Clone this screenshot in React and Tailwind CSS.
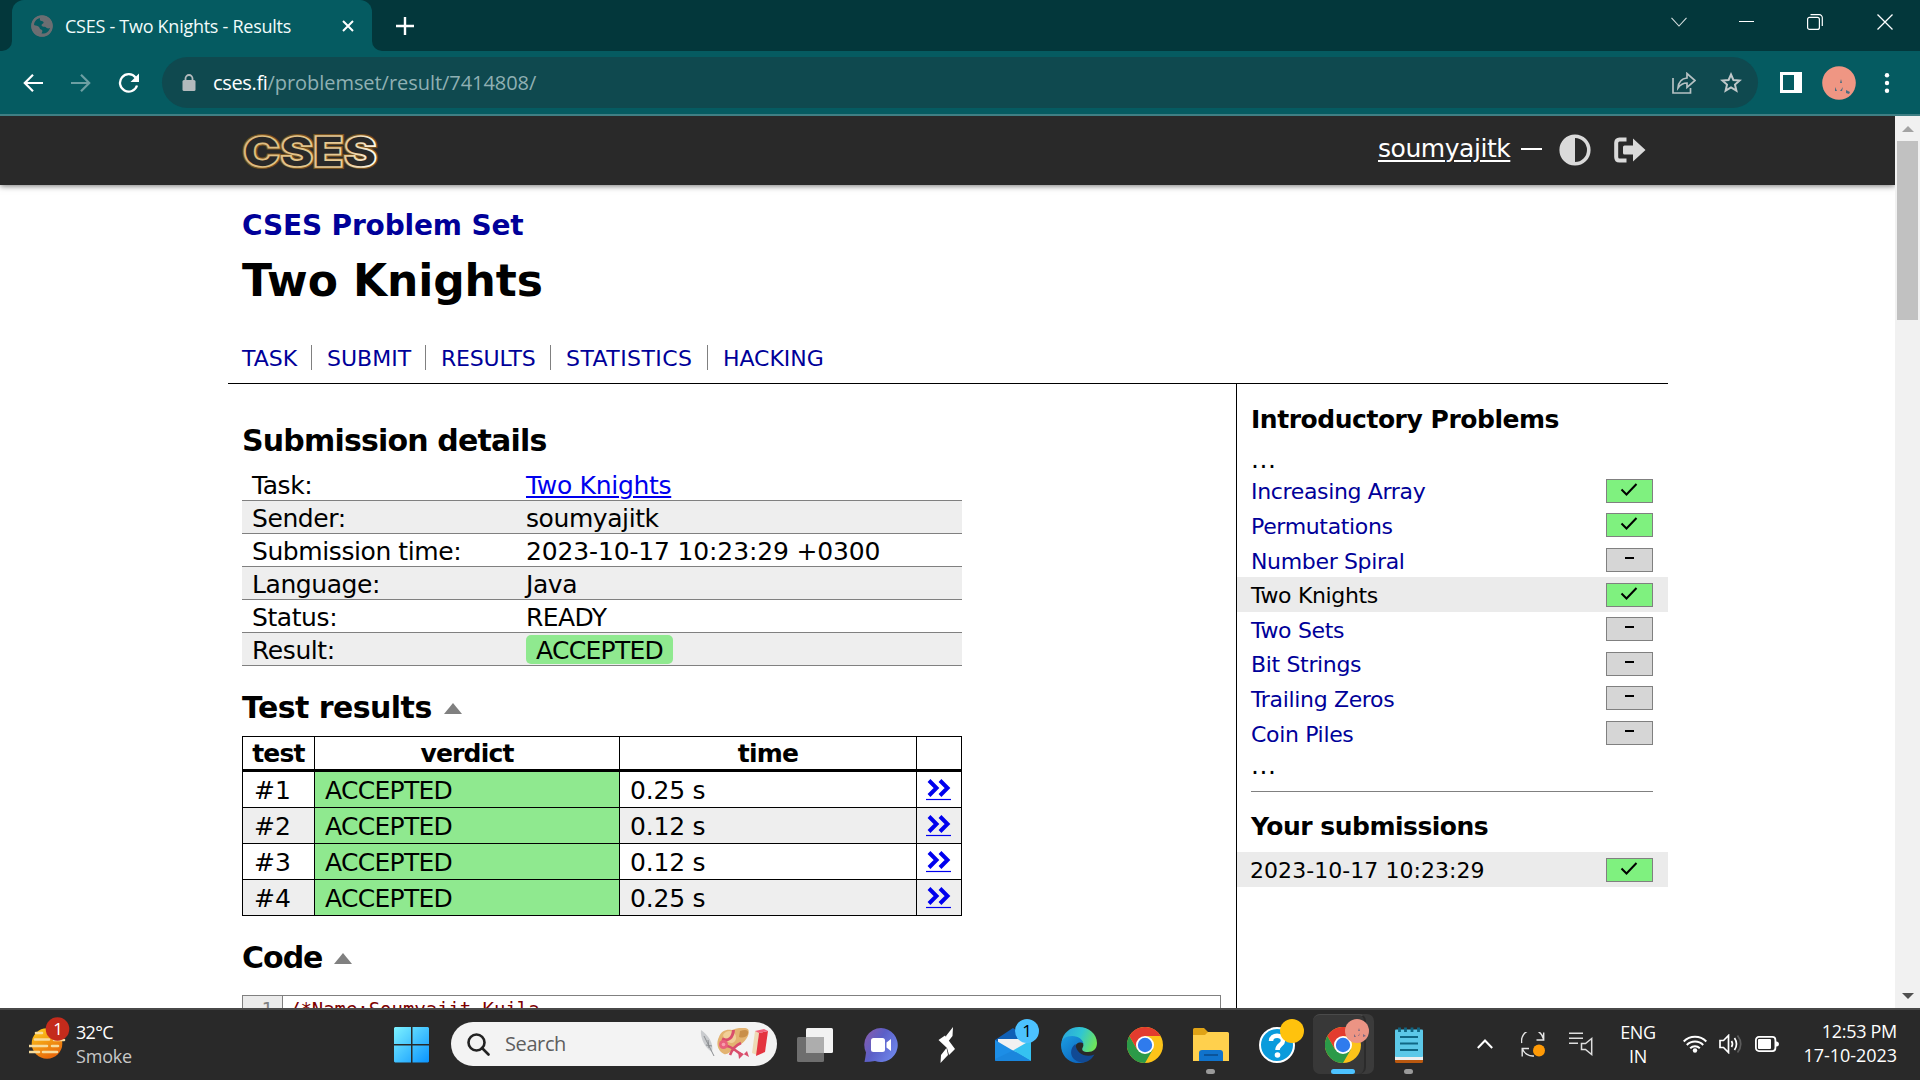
import React from "react";

function Chrome() {
  return (
    <svg viewBox="0 0 48 48" className="h-9 w-9">
      <circle cx="24" cy="24" r="24" fill="#fcc319" />
      <path d="M3.2 12A24 24 0 0 0 24 48L34.4 30L13.6 30Z" fill="#2b9a48" />
      <path d="M3.2 12A24 24 0 0 1 44.8 12L24 12L13.6 30Z" fill="#e33c2e" />
      <circle cx="24" cy="24" r="12" fill="#fff" />
      <circle cx="24" cy="24" r="9.6" fill="#2f7bed" />
    </svg>
  );
}

function StatusBox({ ok }) {
  return (
    <span
      className={`flex h-6 w-[47px] shrink-0 justify-center border border-[#808080] ${ok ? "bg-[#7ff17f]" : "bg-[#d6d6d6]"}`}
    >
      {ok ? (
        <svg viewBox="0 0 18 13" className="mt-[3px] mr-px h-[13px] w-[18px]" fill="none" stroke="#000" strokeWidth="2">
          <path d="M1.5 6.5L6.5 11.500L16.500 1" />
        </svg>
      ) : (
        <span className="mt-[8px] h-[2px] w-[9px] bg-black" />
      )}
    </span>
  );
}

function Slot({ children, running }) {
  return (
    <div className="relative flex h-full w-[66px] items-center justify-center">
      {children}
      {running && <span className="absolute bottom-[6px] left-[28px] h-[5px] w-[9px] rounded-full bg-[#9a9a9a]" />}
    </div>
  );
}

const nav = [
  ["TASK", "w-[70px]", "tracking-[-0.04px]"],
  ["SUBMIT", "w-[114px] pl-[15px]", "tracking-[0px]"],
  ["RESULTS", "w-[125px] pl-[15px]", "tracking-[-0.2px]"],
  ["STATISTICS", "w-[157px] pl-[15px]", "tracking-[0.42px]"],
  ["HACKING", "pl-[15px]", "tracking-[-0.05px]"],
];

const details = [
  ["Task:", <span className="tracking-[-0.3px] text-[#0000ee] underline decoration-2 underline-offset-2">Two Knights</span>],
  ["Sender:", "soumyajitk"],
  ["Submission time:", <span className="tracking-[-0.15px]">2023-10-17 10:23:29 +0300</span>],
  ["Language:", "Java"],
  ["Status:", <span className="tracking-[-0.6px]">READY</span>],
  ["Result:", null],
];

const tests = [
  ["#1", "0.25 s"],
  ["#2", "0.12 s"],
  ["#3", "0.12 s"],
  ["#4", "0.25 s"],
];

const problems = [
  ["Increasing Array", true],
  ["Permutations", true],
  ["Number Spiral", false],
  ["Two Knights", true],
  ["Two Sets", false],
  ["Bit Strings", false],
  ["Trailing Zeros", false],
  ["Coin Piles", false],
];

function Heading({ children, toggle, className = "", tracking = "tracking-[-0.82px]" }) {
  return (
    <h2 className={`flex h-10 items-center text-[30px] leading-10 font-bold ${tracking} ${className}`}>
      {children}
      {toggle && (
        <svg viewBox="0 0 18 11" className="ml-3 h-[11px] w-[18px]">
          <path d="M9 0L18 11H0Z" fill="#808080" />
        </svg>
      )}
    </h2>
  );
}

function BrowserBar() {
  return (
    <div className='h-[116px] bg-[#03373b] font-["Open_Sans",sans-serif]'>
      <div className="flex h-[51px] justify-between">
        <div className="flex">
          <div className="flex w-3 items-end bg-[#055b61]">
            <span className="h-[51px] w-full rounded-br-[10px] bg-[#03373b]" />
          </div>
          <div className="bg-[#03373b]">
            <div className="flex h-[51px] w-[360px] items-center rounded-t-[12px] bg-[#055b61] pl-[19px]">
              <svg viewBox="0 0 22 22" className="h-[22px] w-[22px]">
                <circle cx="11" cy="11" r="10.6" fill="#6b6e72" />
                <path d="M9 3C5 4 3 7 3 10C5 10.500 7 11 8 12C9 13 8.500 14 10 14.500C12 15 11.500 17 10.500 18.500C15 19 18 16.500 19 13C17 14 15.500 13 14.500 12C13.500 11.500 11 12 10.500 10.500C10.500 9 12 9 12.500 8C13 7 12 6 10.500 6C9 6 8.500 4 9 3Z" fill="#055b61" />
                <circle cx="11" cy="11" r="9.800" fill="none" stroke="#6b6e72" strokeWidth="2" />
              </svg>
              <span className="ml-[12px] w-[277px] text-[18px] leading-6 tracking-[-0.27px] whitespace-nowrap text-[#f1fbfb]">CSES - Two Knights - Results</span>
              <svg viewBox="0 0 12 12" className="h-3 w-3" stroke="#fff" strokeWidth="2">
                <path d="M1 1L11 11M11 1L1 11" />
              </svg>
            </div>
          </div>
          <div className="w-[10px] bg-[#055b61]">
            <div className="h-[51px] w-full rounded-bl-[10px] bg-[#03373b]" />
          </div>
          <svg viewBox="0 0 18 18" className="mt-[17px] ml-[14px] h-[18px] w-[18px]" stroke="#fff" strokeWidth="2.4">
            <path d="M9 0V18M0 9H18" />
          </svg>
        </div>
        <div className="flex items-center pr-[27px] pb-[8px]">
          <svg viewBox="0 0 16 10" className="h-[10px] w-4" fill="none" stroke="#d5dede" strokeWidth="1.100">
            <path d="M0.500 0.800L8 9L15.500 0.800" />
          </svg>
          <span className="ml-[52px] h-px w-[15px] bg-white" />
          <svg viewBox="0 0 16 16" className="ml-[53px] h-4 w-4" fill="none" stroke="#fff" strokeWidth="1.200">
            <rect x="0.600" y="3.400" width="11.800" height="12" rx="2" />
            <path d="M3.500 0.700H12A3 3 0 0 1 15.300 4V12" />
          </svg>
          <svg viewBox="0 0 16 16" className="ml-[54px] h-4 w-4" stroke="#fff" strokeWidth="1.300">
            <path d="M0.500 0.500L15.500 15.500M15.500 0.500L0.500 15.500" />
          </svg>
        </div>
      </div>
      <div className="flex h-[65px] items-center border-b-2 border-[#3f7f84] bg-[#055b61]">
        <svg viewBox="0 0 20 18" className="ml-[23px] h-[18px] w-5" fill="none" stroke="#fff" strokeWidth="2.200">
          <path d="M20 9H2M10 0.800L1.800 9L10 17.200" />
        </svg>
        <svg viewBox="0 0 20 18" className="ml-7 h-[18px] w-5" fill="none" stroke="#6d9fa3" strokeWidth="2.200">
          <path d="M0 9H18M10 0.800L18.200 9L10 17.200" />
        </svg>
        <svg viewBox="0 0 22 20" className="ml-[27px] h-5 w-[22px]">
          <path d="M17.600 4.600A8.700 8.700 0 1 0 19 12.500" fill="none" stroke="#fff" strokeWidth="2.300" />
          <path d="M21 0.500V9H12.500Z" fill="#fff" />
        </svg>
        <div className="ml-[22px] flex h-[51px] w-[1596px] items-center rounded-full bg-[#0f494f] pl-5">
          <svg viewBox="0 0 14 17" className="h-[17px] w-[14px]">
            <rect x="0.500" y="6" width="13" height="11" rx="1.500" fill="#b3babd" />
            <path d="M3.500 7V4.500A3.500 3.500 0 0 1 10.500 4.500V7" fill="none" stroke="#b3babd" strokeWidth="1.800" />
          </svg>
          <span className="ml-[17px] flex-1 text-[20px] leading-7 tracking-[-0.05px] text-[#8fb0b3]">
            <span className="tracking-[-0.35px] text-white">cses.fi</span>/problemset/result/7414808/
          </span>
          <svg viewBox="0 0 24 22" className="mr-[24px] h-[22px] w-6" fill="none" stroke="#b6c1c3" strokeWidth="1.700">
            <path d="M1 6V21H18.500V16" />
            <path d="M6 16C6.500 10 9.500 6.500 15 6V1.500L23 8.500L15 15.500V11C11 11 8.500 12.500 6 16Z" />
          </svg>
          <svg viewBox="0 0 22 21" className="mr-4 h-[21px] w-[22px]" fill="none" stroke="#c0c8ca" strokeWidth="2">
            <path d="M11 2.500L13.400 8L19.700 8.500L15 12.600L16.400 18.700L11 15.500L5.600 18.700L7 12.600L2.300 8.500L8.600 8Z" />
          </svg>
        </div>
        <svg viewBox="0 0 22 21" className="ml-[22px] h-[21px] w-[22px]">
          <path d="M0 0H22V21H0ZM3 3V18H14V3Z" fill="#fff" fillRule="evenodd" />
        </svg>
        <svg viewBox="0 0 34 34" className="ml-[20px] h-[34px] w-[34px]">
          <circle cx="17" cy="17" r="16.800" fill="#ef9683" />
          <path d="M19 13L20 17H18ZM13 21L15 25H13ZM21 21L20 25H18ZM24 24L28 26L27 28L24 27Z" fill="#4d6d80" />
        </svg>
        <svg viewBox="0 0 6 20" className="ml-7 h-5 w-[6px]" fill="#fff">
          <circle cx="3" cy="2.300" r="2.200" />
          <circle cx="3" cy="10" r="2.200" />
          <circle cx="3" cy="17.700" r="2.200" />
        </svg>
      </div>
    </div>
  );
}

function SiteHeader() {
  return (
    <header className="relative flex h-[69px] w-[1895px] shrink-0 items-center bg-[#292929] shadow-[0_1px_6px_rgba(0,0,0,0.55)]">
      <svg viewBox="0 0 140 64" className="ml-[240px] h-16 w-[140px] overflow-visible">
        <defs>
          <linearGradient id="gold" gradientUnits="userSpaceOnUse" x1="0" x2="138" y1="0" y2="20">
            <stop offset="0" stopColor="#dcb978" />
            <stop offset="0.800" stopColor="#e8cd98" />
            <stop offset="1" stopColor="#fff8ea" />
          </linearGradient>
        </defs>
        <g fontFamily="Inter, sans-serif" fontWeight="900" fontSize="43" strokeLinejoin="miter">
          <text x="3" y="47.500" textLength="134" lengthAdjust="spacingAndGlyphs" fill="#292929" stroke="#75511f" strokeWidth="4">CSES</text>
          <text x="3" y="47.500" textLength="134" lengthAdjust="spacingAndGlyphs" fill="#292929" stroke="url(#gold)" strokeWidth="1.700">CSES</text>
        </g>
      </svg>
      <span className="ml-[998px] pb-1 text-[25px] leading-8 tracking-[-0.45px] text-white underline decoration-2 underline-offset-[3px]">soumyajitk</span>
      <span className="ml-[11px] mb-[3px] h-[2px] w-[21px] bg-white" />
      <svg viewBox="0 0 32 32" className="mb-px ml-[17px] h-8 w-8">
        <circle cx="16" cy="16" r="13.800" fill="none" stroke="#dadada" strokeWidth="3.600" />
        <path d="M16 1A15 15 0 0 0 16 31Z" fill="#dadada" />
      </svg>
      <svg viewBox="0 0 32 26" className="mb-px ml-[23px] h-[26px] w-8">
        <path d="M12.500 2.500H5.500Q2.200 2.500 2.200 6V20Q2.200 23.500 5.500 23.500H12.500" fill="none" stroke="#dadada" strokeWidth="4" />
        <path d="M19 1.500L31.500 13L19 24.500V17.500H10.500Q9 17.500 9 16V10Q9 8.500 10.500 8.500H19Z" fill="#dadada" />
      </svg>
    </header>
  );
}

function Sidebar() {
  return (
    <aside className="w-[432px] border-l border-black pt-[21px]">
      <h3 className="pl-[14px] text-[25px] leading-[30px] font-bold tracking-[-0.46px]">Introductory Problems</h3>
      <div className="mt-[9px] h-[29.4px] pl-[14px] text-[25px] leading-[32px] tracking-[0.5px]">...</div>
      {problems.map(([name, ok]) => (
        <div
          key={name}
          className={`flex h-[34.6px] justify-between pr-[15px] pl-[14px] ${name === "Two Knights" ? "bg-[#ebebeb] text-black" : "text-[#000099]"}`}
        >
          <span className="pt-px text-[22px] leading-[36px] tracking-[-0.34px]">{name}</span>
          <span className="pt-[5.500px]">
            <StatusBox ok={ok} />
          </span>
        </div>
      ))}
      <div className="h-[30px] pl-[14px] text-[25px] leading-[32px] tracking-[0.5px]">...</div>
      <div className="mt-[10.5px] mr-[15px] ml-[14px] h-px bg-[#808080]" />
      <h3 className="mt-[20px] pl-[14px] text-[25px] leading-[30px] font-bold tracking-[-0.5px]">Your submissions</h3>
      <div className="mt-[10px] flex h-[35px] justify-between bg-[#ebebeb] pt-px pr-[15px] pl-[13px]">
        <span className="text-[22px] leading-[35px] tracking-[0.05px]">2023-10-17 10:23:29</span>
        <span className="pt-[5px]">
          <StatusBox ok />
        </span>
      </div>
    </aside>
  );
}

function Taskbar() {
  return (
    <footer className='flex h-[72px] border-t-2 border-[#484848] bg-[#292929] font-["Open_Sans",sans-serif] text-[18px] text-white'>
      <div className="flex w-[394px] items-start pl-[29px]">
        <svg viewBox="0 0 42 44" className="mt-[6px] h-11 w-[42px]">
          <defs>
            <linearGradient id="sun" x1="0" y1="0" x2="0.500" y2="1">
              <stop offset="0" stopColor="#ffd21c" />
              <stop offset="1" stopColor="#e86a0c" />
            </linearGradient>
          </defs>
          <circle cx="18" cy="27.500" r="15.300" fill="url(#sun)" />
          <path d="M7 17H13M6 23.500H20M25 24H35M0 30H18M23 30H29M0 36H10M14 36H28" stroke="#f7dc9d" strokeWidth="2.600" strokeLinecap="round" />
          <circle cx="28.500" cy="13" r="11.800" fill="#c42b1c" />
          <text x="29" y="19" textAnchor="middle" fontSize="17" fill="#fff">1</text>
        </svg>
        <div className="mt-[10px] ml-[5px] leading-6">
          <div className="tracking-[-0.7px]">32°C</div>
          <div className="tracking-[-0.2px] text-[#c8c8c8]">Smoke</div>
        </div>
      </div>
      <svg viewBox="0 0 36 36" className="mt-[17px] h-9 w-9">
        <defs>
          <linearGradient id="win" x1="0" y1="0" x2="1" y2="1">
            <stop offset="0" stopColor="#7df2ff" />
            <stop offset="1" stopColor="#0a94ff" />
          </linearGradient>
        </defs>
        <path d="M1 0H17V17H0V1ZM18.500 0H34L35 1V17H18.500ZM0 18.500H17V35.500H1L0 34.500ZM18.500 18.500H35V34.500L34 35.500H18.500Z" fill="url(#win)" />
      </svg>
      <div className="mt-3 ml-[21px] flex h-11 w-[326px] items-center rounded-full bg-[#f3f3f3] pl-4">
        <svg viewBox="0 0 23 23" className="h-[23px] w-[23px]" fill="none" stroke="#222" strokeWidth="2.600">
          <circle cx="9.500" cy="9.500" r="8" />
          <path d="M15 15L21.500 21.500" strokeLinecap="round" />
        </svg>
        <span className="ml-[15px] w-[194px] text-[20px] tracking-[-0.4px] text-[#5e5e5e]">Search</span>
        <svg viewBox="0 0 70 32" className="h-8 w-[70px]">
          <path d="M2 2C9 7 15 15 13 24C6 20 1 10 2 2Z" fill="#c9cbce" />
          <path d="M5 8L15 28M7 17L13 18M9 12L10 20" stroke="#8b8e91" strokeWidth="1" />
          <path d="M20 9C22 3 27 1 33 2C40 -1 48 -1 49.500 2C51 8 45 16 36 19C32 24 28 27 25 26C18 22 17 15 20 9Z" fill="#e3b371" />
          <path d="M24 7C28 0 38 3 37 11C35 18 26 15 24 7Z" fill="#f1cf98" />
          <path d="M41 3C47 1 50 2 49 6C47 10 43 10 40 9Z" fill="#c98f4a" />
          <path d="M23 11C30 14 34 9 34.500 2" fill="none" stroke="#d94e6c" strokeWidth="3" />
          <path d="M27 18C33 18 36 23 43 27M42 15C37 17 33 22 31 27" fill="none" stroke="#d94e6c" strokeWidth="2.600" />
          <circle cx="24.500" cy="16.500" r="4.500" fill="#e9607c" />
          <circle cx="24.500" cy="16.500" r="1.800" fill="#f79fae" />
          <path d="M39 23L50 29L48 23L40 31Z" fill="#d94e6c" />
          <path d="M56 3L60 4L58 27L53 25Z" fill="#eedab6" />
          <path d="M60 5L69 3L66 24L57 28Z" fill="#e43440" />
          <path d="M56 3L65 1L69 3L60 5Z" fill="#f0607a" />
        </svg>
      </div>

      <div className="ml-[5px] flex h-[70px]">
        <Slot>
          <svg viewBox="0 0 36 34" className="h-[34px] w-9">
            <rect x="9" width="27" height="25" rx="1.500" fill="#f2f2f2" />
            <rect y="9" width="27" height="25" rx="1.500" fill="#6e6e6e" />
            <rect x="9" y="9" width="18" height="16" fill="#adadad" />
          </svg>
        </Slot>
        <Slot>
          <svg viewBox="0 0 34 34" className="mr-px h-[34px] w-[34px]">
            <defs>
              <linearGradient id="chat" x1="0" x2="1" y2="0.600">
                <stop offset="0" stopColor="#8d5ba8" />
                <stop offset="0.500" stopColor="#5b5fc7" />
                <stop offset="1" stopColor="#6d83e8" />
              </linearGradient>
            </defs>
            <path d="M17 0A17 17 0 1 1 11 33Q6 34 0.500 34Q1.500 29 2 24.500A17 17 0 0 1 17 0Z" fill="url(#chat)" />
            <rect x="7" y="10" width="14" height="14" rx="2.500" fill="#fff" />
            <path d="M22.500 14.500L27 11V23L22.500 19.500Z" fill="#fff" />
          </svg>
        </Slot>
        <Slot>
          <svg viewBox="0 0 18 36" className="h-9 w-[18px]" fill="#fff">
            <path d="M15 0L14.500 9L9 16L8 9ZM0.500 13L7 8.500L17 22L11 28L9 21ZM2.500 36L3 28L8.500 21L10 28Z" />
          </svg>
        </Slot>
        <Slot>
          <svg viewBox="0 0 36 34" className="h-[34px] w-9">
            <path d="M0 12L18 0L36 12V33H0Z" fill="#0f5fb5" />
            <path d="M3 11H33V24H3Z" fill="#f1f1f1" />
            <path d="M0 12L36 33H2Q0 33 0 31Z" fill="#1d8ee6" />
            <path d="M36 12L18 22.500L36 33Z" fill="#35c2f1" />
            <path d="M0 31L18 22.500L36 33H2Q0 33 0 31Z" fill="#1a86dd" />
          </svg>
          <span className="absolute top-[9px] left-[35px] flex h-6 w-6 items-center justify-center rounded-full bg-[#4cc2ff] text-[17px] text-black">1</span>
        </Slot>
        <Slot>
          <svg viewBox="0 0 36 36" className="h-9 w-9">
            <defs>
              <linearGradient id="edgeTop" x1="0" x2="1" y1="0.300" y2="0.600">
                <stop offset="0" stopColor="#2aa6dd" />
                <stop offset="0.500" stopColor="#30c6d2" />
                <stop offset="1" stopColor="#6fe558" />
              </linearGradient>
              <linearGradient id="edgeLeft" x1="0" x2="0.800" y1="0" y2="1">
                <stop offset="0" stopColor="#1b9de2" />
                <stop offset="1" stopColor="#0c62bb" />
              </linearGradient>
            </defs>
            <path d="M0.500 15C2 6 9 0 18 0C28 0 36 7 36 16C36 22 32 25 27 25C22 25 20 23 22 20C24 15 18 10 12 10C6 10 2 13 0.500 15Z" fill="url(#edgeTop)" />
            <path d="M0 18C0 12 5 9 11 9C18 9 22 13 22.500 17C20 14 14 16 14 21C14 28 22 35 25 34.500C12 40 0 31 0 18Z" fill="url(#edgeLeft)" />
            <path d="M14.500 17C7 22 9 35 22 35.500C27 35 31 32 33.500 27.500C25 31 15 27 14.500 17Z" fill="#114a94" />
          </svg>
        </Slot>
        <Slot>
          <Chrome />
        </Slot>
        <Slot running>
          <svg viewBox="0 0 36 34" className="h-[34px] w-9">
            <path d="M0 1.500Q0 0 1.500 0H11L15 4H34V12H0Z" fill="#e0a316" />
            <path d="M0 7H12L15 4H34.500Q36 4 36 5.500V33H0Z" fill="#ffd04d" />
            <path d="M6 33V25Q6 22 9 22H27Q30 22 30 25V33Z" fill="#1073cc" />
            <path d="M11 27H25" stroke="#0a4a8a" strokeWidth="1.500" />
          </svg>
        </Slot>
        <Slot>
          <svg viewBox="0 0 36 36" className="h-9 w-9">
            <circle cx="18" cy="18" r="17" fill="#0a9bdc" stroke="#fff" strokeWidth="2" />
            <path d="M12 14C12 7 24 7 24 13.500C24 18 18.500 17.500 18.500 23" fill="none" stroke="#fff" strokeWidth="4.500" />
            <circle cx="18.500" cy="28" r="2.800" fill="#fff" />
          </svg>
          <span className="absolute top-[9px] left-[36px] h-6 w-6 rounded-full bg-[#ffc20d]" />
        </Slot>
        <Slot>
          <span className="absolute top-1 left-1 h-[60px] w-[60px] rounded-[7px] bg-[#3b3b3b]" />
          <span className="absolute top-1 left-[3px] h-[60px] w-[53px] rounded-[7px] border-t border-r-2 border-[#4a4a4a] border-r-[#2b2b2b] bg-[#383838]" />
          <div className="relative">
            <Chrome />
          </div>
          <svg viewBox="0 0 24 24" className="absolute top-[9px] left-[35px] h-6 w-6">
            <circle cx="12" cy="12" r="12" fill="#ec9484" />
            <path d="M14 9L15 12H13ZM9 15L11 18H9ZM18 15L21 17L18 18ZM15 14L14 17H13Z" fill="#7c6a80" />
          </svg>
          <span className="absolute bottom-[6px] left-[21px] h-[5px] w-6 rounded-full bg-[#4cc2ff]" />
        </Slot>
        <Slot running>
          <svg viewBox="0 0 28 36" className="h-9 w-7">
            <rect y="30" width="28" height="6" rx="1.500" fill="#b9580f" />
            <rect y="26" width="28" height="7" fill="#efefef" />
            <rect y="2.500" width="28" height="27.500" rx="1" fill="#5cc8e8" />
            <path d="M5 10H23M5 16.500H23M5 23H23" stroke="#0f6785" strokeWidth="2" />
            <path d="M4.500 0.500V5M10.500 0.500V5M17 0.500V5M23.500 0.500V5" stroke="#0f6785" strokeWidth="2.800" />
          </svg>
        </Slot>
      </div>

      <div className="ml-[35px] flex h-[70px] flex-1 items-center pb-[2px]">
        <svg viewBox="0 0 16 10" className="h-[10px] w-4" fill="none" stroke="#fff" strokeWidth="2">
          <path d="M0.800 9L8 1.500L15.200 9" />
        </svg>
        <svg viewBox="0 0 24 25" className="ml-7 h-[25px] w-6" fill="none" stroke="#e6e6e6" strokeWidth="1.400">
          <path d="M0.700 11A11 11 0 0 1 22.500 7M22.700 0.500V8H15.500M1.200 24.500V16.500H8M1.500 17A11 11 0 0 0 13 24" />
          <circle cx="18" cy="18.500" r="6" fill="#ff9a06" stroke="none" />
        </svg>
        <svg viewBox="0 0 24 24" className="mb-px ml-6 h-6 w-6" fill="none" stroke="#dedede" strokeWidth="1.500">
          <path d="M0 1.200H14M0 6.200H14M0 11.200H9" />
          <path d="M12.500 11.500H16.500L22.700 6.500V22.500L16.500 17.500H12.500Z" />
        </svg>
        <div className="ml-[26px] w-[38px] text-center leading-6 tracking-[-0.4px]">
          ENG
          <br />
          IN
        </div>
        <svg viewBox="0 0 24 18" className="ml-[26px] h-[18px] w-6" fill="none" stroke="#fff" strokeWidth="2">
          <path d="M0.700 6.500A16 16 0 0 1 23.300 6.500M3.800 10A11.500 11.500 0 0 1 20.200 10M7.200 13.300A6.800 6.800 0 0 1 16.800 13.300" />
          <circle cx="12" cy="15.500" r="2.200" fill="#fff" stroke="none" />
        </svg>
        <svg viewBox="0 0 24 20" className="ml-3 h-5 w-6" fill="none" stroke="#fff" strokeWidth="1.700">
          <path d="M1 6.500H4.500L9.500 1.500V18.500L4.500 13.500H1Z" />
          <path d="M12.500 7Q14.500 10 12.500 13M15.500 4Q19.500 10 15.500 16" />
          <path d="M18.500 1.500Q25 10 18.500 18.500" stroke="#5c5c5c" />
        </svg>
        <svg viewBox="0 0 24 16" className="ml-3 h-4 w-6">
          <rect x="0.900" y="0.900" width="19.500" height="14.200" rx="3" fill="none" stroke="#fff" strokeWidth="1.800" />
          <rect x="3" y="3" width="13" height="10" rx="1" fill="#fff" />
          <path d="M21 5.500H22Q24 6 24 8T22 10.500H21Z" fill="#fff" />
        </svg>
        <div className="mb-[2px] ml-auto pr-[23px] text-right leading-6">
          <div className="tracking-[-0.3px]">12:53 PM</div>
          <div className="tracking-[-0.05px]">17-10-2023</div>
        </div>
      </div>
    </footer>
  );
}

export default function App() {
  return (
    <div className='flex h-[1080px] w-[1920px] flex-col overflow-hidden bg-white font-["DejaVu_Sans",sans-serif] text-black'>
      <BrowserBar />
      <div className="flex h-[892px]">
        <div className="flex h-[892px] w-[1895px] flex-col overflow-hidden">
          <SiteHeader />
          <div className="ml-[228px] w-[1440px] pt-[21px] pl-[14px]">
            <div className="text-[28px] leading-10 font-bold tracking-[-0.15px] text-[#000099]">CSES Problem Set</div>
            <h1 className="mt-[7px] text-[44px] leading-[56px] font-bold tracking-[-0.1px]">Two Knights</h1>
            <nav className="mt-9 mb-[13px] flex h-[25px] text-[22px] leading-[28px] text-[#000099]">
              {nav.map(([label, width, tracking], i) => (
                <span key={label} className={`${width} ${tracking} whitespace-nowrap ${i < 4 ? "border-r border-[#808080]" : ""}`}>
                  {label}
                </span>
              ))}
            </nav>
          </div>
          <div className="ml-[228px] flex h-[640px] w-[1440px] shrink-0 border-t border-black">
            <main className="w-[1008px] pt-[37px] pl-[14px]">
              <Heading>Submission details</Heading>
              <div className="mt-[7px] w-[720px]">
                {details.map(([label, value], i) => (
                  <div
                    key={label}
                    className={`flex h-[33px] border-b border-[#808080] pl-[10px] text-[25px] leading-[36px] tracking-[-0.42px] ${i % 2 ? "bg-[#eeeeee]" : ""}`}
                  >
                    <span className="w-[274px]">{label}</span>
                    {value ?? (
                      <span className="mt-[2px] h-[29px] rounded-[5px] bg-[#8fe98f] px-[10px] leading-[32px] tracking-[-0.7px]">ACCEPTED</span>
                    )}
                  </div>
                ))}
              </div>
              <Heading toggle className="mt-[22px]" tracking="tracking-[-0.55px]">Test results</Heading>
              <div className="mt-2 w-[720px] border-t border-black text-[25px]">
                <div className="grid h-[35px] grid-cols-[72px_305px_297px_45px_1px] grid-rows-[32px] border-b-[3px] border-black text-center leading-[34px] font-bold tracking-[-0.8px] *:border-l *:border-black">
                  <span>test</span>
                  <span>verdict</span>
                  <span>time</span>
                  <span />
                  <span />
                </div>
                {tests.map(([id, time], i) => (
                  <div
                    key={id}
                    className={`grid h-9 grid-cols-[72px_305px_297px_45px_1px] grid-rows-[35px] border-b border-black leading-[37px] *:border-l *:border-black ${i % 2 ? "bg-[#eeeeee]" : ""}`}
                  >
                    <span className="pl-[11px]">{id}</span>
                    <span className="bg-[#8fe98f] pl-[10px] tracking-[-0.7px]">ACCEPTED</span>
                    <span className="pl-[10px] tracking-[-0.2px]">{time}</span>
                    <span className="pt-[6px] pl-[9px]">
                      <svg viewBox="0 0 25 23" className="h-[23px] w-[25px]" fill="none" stroke="#0000ee">
                        <path d="M3 2.500L10.500 10L3 17.500M14 2.500L21.500 10L14 17.500" strokeWidth="4" />
                        <path d="M0 21.500H25" strokeWidth="1.200" />
                      </svg>
                    </span>
                    <span />
                  </div>
                ))}
              </div>
              <Heading toggle className="mt-[22px]" tracking="tracking-[-1px]">Code</Heading>
              <div className='mt-[17px] flex h-[60px] w-[979px] border border-[#808080] font-["DejaVu_Sans_Mono",monospace] text-[19px] leading-[24px] tracking-[-0.05px]'>
                <span className="w-10 border-r border-[#808080] bg-[#ebebeb] pt-px pr-[9px] text-right text-[#808080]">1</span>
                <span className="pt-px pl-[6px] text-[#800000]">/*Name:Soumyajit Kuila</span>
              </div>
            </main>
            <Sidebar />
          </div>
        </div>
        <div className="flex w-[25px] flex-col items-center justify-between bg-[#f1f1f1] pt-[10px] pb-[9px]">
          <div className="flex flex-col items-center">
            <svg viewBox="0 0 12 6" className="h-[6px] w-3">
              <path d="M6 0L12 6H0Z" fill="#a3a3a3" />
            </svg>
            <div className="mt-[9px] h-[179px] w-[21px] bg-[#c1c1c1]" />
          </div>
          <svg viewBox="0 0 12 6" className="h-[6px] w-3">
            <path d="M0 0H12L6 6Z" fill="#505050" />
          </svg>
        </div>
      </div>
      <Taskbar />
    </div>
  );
}
